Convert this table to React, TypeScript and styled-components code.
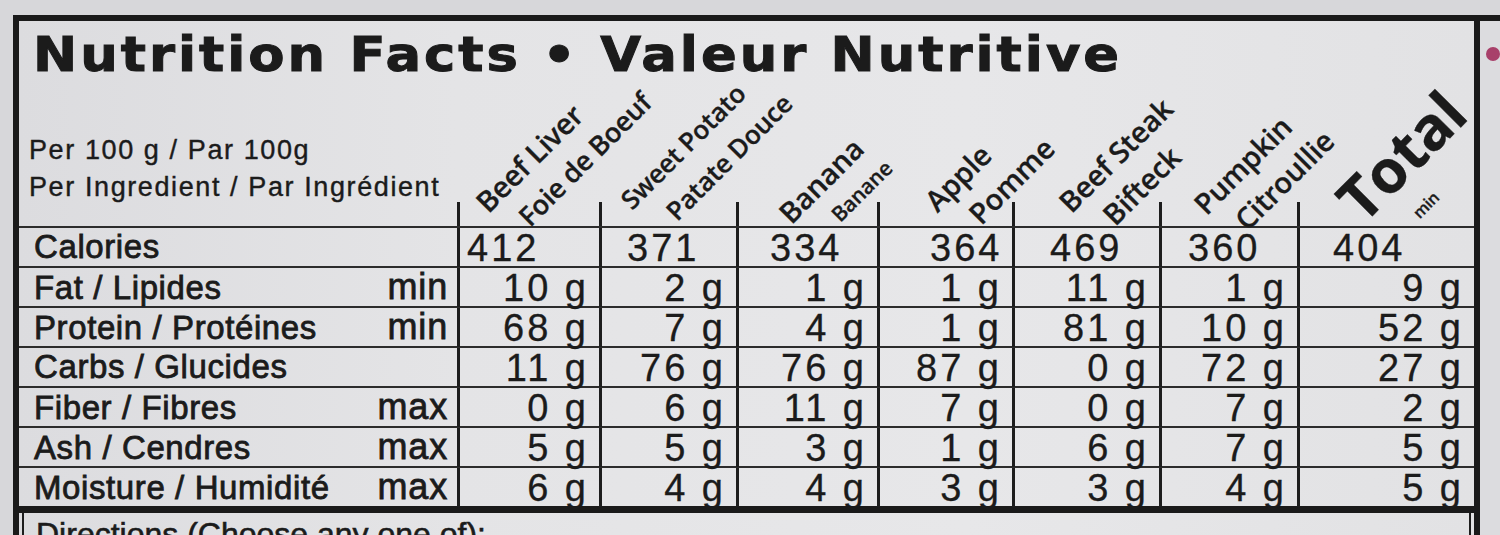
import React from "react";
import styled, { createGlobalStyle } from "styled-components";

const COLS = "438px 142px 137px 141px 135px 147px 138px 1fr";

const GlobalStyle = createGlobalStyle`
  html, body {
    margin: 0;
    padding: 0;
  }
  body {
    width: 1500px;
    height: 535px;
    overflow: hidden;
    background: #d7d7da;
    color: #1b1b1b;
    font-family: "Liberation Sans", Arial, sans-serif;
  }
`;

const Page = styled.div`
  box-sizing: border-box;
  height: 535px;
  display: flex;
  align-items: flex-start;
  padding: 15px 0 0 13px;
  overflow: hidden;
`;

const LabelBox = styled.div`
  box-sizing: border-box;
  width: 1475px;
  height: 560px;
  border: 6px solid #1a1a1a;
  border-bottom: none;
  background: linear-gradient(90deg, #dcdcdf 0%, #e4e4e6 30%, #e7e7e9 65%, #e2e2e4 100%);
`;

const EdgeStrip = styled.div`
  flex: 1;
  align-self: stretch;
  border-top: 6px solid #1a1a1a;
  background: #dcdcdf;
`;

const Dot = styled.div`
  width: 14px;
  height: 14px;
  margin: 26px 0 0 6px;
  border-radius: 50%;
  background: #a8406a;
`;

const Title = styled.h1`
  margin: 5px 0 0 14px;
  font-family: "DejaVu Sans", Verdana, sans-serif;
  font-weight: 700;
  font-size: 48px;
  line-height: 56px;
  letter-spacing: 2.7px;
  white-space: nowrap;
  transform: scaleX(1.1);
  transform-origin: 0 50%;
  -webkit-text-stroke: 1px #1b1b1b;
`;

const HeaderRow = styled.div`
  display: grid;
  grid-template-columns: ${COLS};
  height: 144px;
`;

const Basis = styled.div`
  display: flex;
  flex-direction: column;
  justify-content: flex-end;
  padding: 0 0 20px 10px;
  font-size: 27px;
  line-height: 37px;
  letter-spacing: 1.6px;
  white-space: nowrap;
  -webkit-text-stroke: 0.4px #1b1b1b;
`;

const HeadCell = styled.div`
  display: flex;
  flex-direction: column;
  justify-content: flex-end;
  align-items: flex-start;
`;

const Rotated = styled.div<{ $x: number; $y: number }>`
  width: max-content;
  white-space: nowrap;
  transform-origin: 0 100%;
  transform: translate(${(p) => p.$x}px, ${(p) => p.$y}px) rotate(-45deg);
  font-family: "Open Sans", "Noto Sans", sans-serif;
  -webkit-text-stroke: 0.3px #1b1b1b;
`;

const HeadLine = styled.div<{ $indent?: number; $size?: number; $lh?: number; $weight?: number; $gap?: number }>`
  margin-left: ${(p) => p.$indent ?? 0}px;
  margin-top: ${(p) => p.$gap ?? 5}px;
  font-size: ${(p) => p.$size ?? 29}px;
  line-height: ${(p) => p.$lh ?? 35}px;
  font-weight: ${(p) => p.$weight ?? 600};
  letter-spacing: -0.2px;
`;

const Tick = styled.div`
  width: 0;
  height: 24px;
  border-left: 3px solid #1d1d1d;
`;

const Row = styled.div`
  box-sizing: border-box;
  display: grid;
  grid-template-columns: ${COLS};
  height: 40px;
  border-top: 2px solid #2c2c2c;
`;

const NameCell = styled.div`
  display: flex;
  justify-content: space-between;
  align-items: baseline;
  padding: 0 9px 0 15px;
  font-size: 33px;
  line-height: 38px;
  letter-spacing: 0.6px;
  white-space: nowrap;
  -webkit-text-stroke: 0.8px #1b1b1b;
`;

const Qualifier = styled.span`
  font-size: 36px;
  letter-spacing: 0.8px;
`;

const ValueCell = styled.div<{ $indent?: number }>`
  border-left: 3px solid #1d1d1d;
  padding: 1px 10px 0 ${(p) => p.$indent ?? 0}px;
  font-size: 38px;
  line-height: 38px;
  letter-spacing: 3px;
  text-align: ${(p) => (p.$indent === undefined ? "right" : "left")};
  white-space: nowrap;
  -webkit-text-stroke: 0.3px #1b1b1b;
`;

const Directions = styled.div`
  border-top: 7px solid #1a1a1a;
`;

const DirectionsBox = styled.div`
  margin: 0 3px;
  height: 60px;
  border-left: 2px solid #1d1d1d;
  border-right: 2px solid #1d1d1d;
  padding: 2px 0 0 12px;
  font-size: 32px;
  line-height: 38px;
  -webkit-text-stroke: 0.6px #1b1b1b;
`;

type Line = { text: string; indent?: number; size?: number; lh?: number; weight?: number; gap?: number };
type Head = { lines: Line[]; x: number; y: number };

const heads: Head[] = [
  { lines: [{ text: "Beef Liver", gap: 0 }, { text: "Foie de Boeuf", indent: 20, size: 27 }], x: 64, y: 45 },
  { lines: [{ text: "Sweet Potato", size: 26, gap: 0 }, { text: "Patate Douce", indent: 24, size: 26 }], x: 67, y: 43 },
  { lines: [{ text: "Banana", gap: 0 }, { text: "Banane", indent: 36, size: 21, lh: 28 }], x: 83, y: 51 },
  { lines: [{ text: "Apple", gap: 0 }, { text: "Pomme", indent: 22 }], x: 93, y: 44 },
  { lines: [{ text: "Beef Steak", gap: 0 }, { text: "Bifteck", indent: 22 }], x: 92, y: 45 },
  { lines: [{ text: "Pumpkin", gap: 0 }, { text: "Citroullie", indent: 18 }], x: 80, y: 47 },
  {
    lines: [
      { text: "Total", size: 60, lh: 58, weight: 700, gap: 0 },
      { text: "min", indent: 44, size: 16, lh: 16, gap: 16 },
    ],
    x: 93,
    y: 50,
  },
];

type Nutrient = { name: string; limit?: string; values: string[] };

const calorieIndent = [7, 25, 31, 50, 35, 26, 33];

const calories = ["412", "371", "334", "364", "469", "360", "404"];

const nutrients: Nutrient[] = [
  { name: "Fat / Lipides", limit: "min", values: ["10 g", "2 g", "1 g", "1 g", "11 g", "1 g", "9 g"] },
  { name: "Protein / Protéines", limit: "min", values: ["68 g", "7 g", "4 g", "1 g", "81 g", "10 g", "52 g"] },
  { name: "Carbs / Glucides", values: ["11 g", "76 g", "76 g", "87 g", "0 g", "72 g", "27 g"] },
  { name: "Fiber / Fibres", limit: "max", values: ["0 g", "6 g", "11 g", "7 g", "0 g", "7 g", "2 g"] },
  { name: "Ash / Cendres", limit: "max", values: ["5 g", "5 g", "3 g", "1 g", "6 g", "7 g", "5 g"] },
  { name: "Moisture / Humidité", limit: "max", values: ["6 g", "4 g", "4 g", "3 g", "3 g", "4 g", "5 g"] },
];

const App = () => {
  return (
    <>
      <GlobalStyle />
      <Page>
        <LabelBox>
          <Title>Nutrition Facts • Valeur Nutritive</Title>
          <HeaderRow>
            <Basis>
              <div>Per 100 g / Par 100g</div>
              <div>Per Ingredient / Par Ingrédient</div>
            </Basis>
            {heads.map((h) => (
              <HeadCell key={h.lines[0].text}>
                <Rotated $x={h.x} $y={h.y}>
                  {h.lines.map((l) => (
                    <HeadLine
                      key={l.text}
                      $indent={l.indent}
                      $size={l.size}
                      $lh={l.lh}
                      $weight={l.weight}
                      $gap={l.gap}
                    >
                      {l.text}
                    </HeadLine>
                  ))}
                </Rotated>
                <Tick />
              </HeadCell>
            ))}
          </HeaderRow>
          <Row>
            <NameCell>Calories</NameCell>
            {calories.map((c, i) => (
              <ValueCell key={i} $indent={calorieIndent[i]}>
                {c}
              </ValueCell>
            ))}
          </Row>
          {nutrients.map((n) => (
            <Row key={n.name}>
              <NameCell>
                <span>{n.name}</span>
                {n.limit && <Qualifier>{n.limit}</Qualifier>}
              </NameCell>
              {n.values.map((v, i) => (
                <ValueCell key={i}>{v}</ValueCell>
              ))}
            </Row>
          ))}
          <Directions>
            <DirectionsBox>Directions (Choose any one of):</DirectionsBox>
          </Directions>
        </LabelBox>
        <EdgeStrip>
          <Dot />
        </EdgeStrip>
      </Page>
    </>
  );
};

export default App;
